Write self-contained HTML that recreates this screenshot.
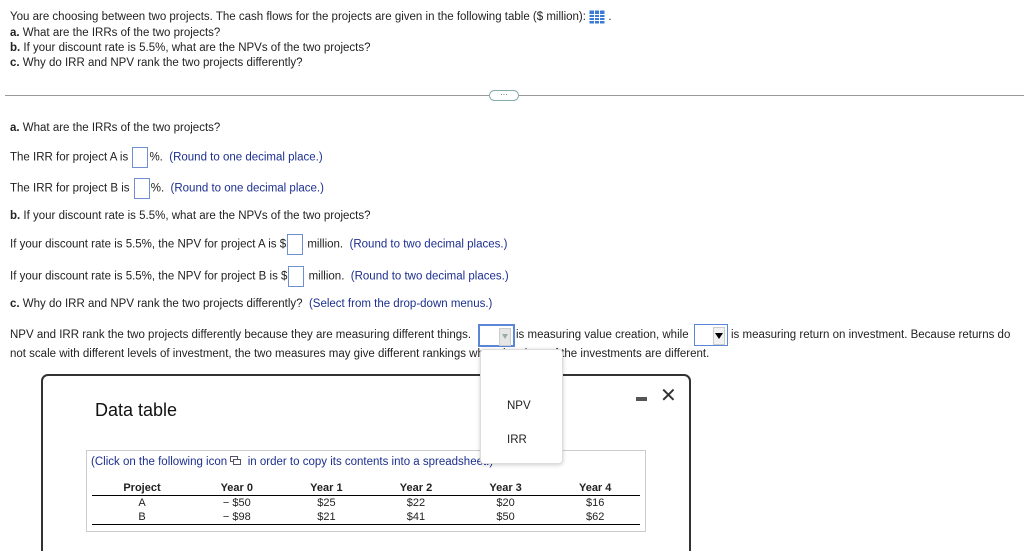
<!DOCTYPE html>
<html style="overflow:hidden;height:551px"><head><style>
body{margin:0;width:1024px;height:551px;overflow:hidden;background:#fff;font-family:"Liberation Sans",Arial,sans-serif;font-size:11.5px;color:#222;position:relative}
.t{position:absolute;white-space:nowrap;line-height:13px}
.bl{color:#1c2f8f}
.box{display:inline-block;width:14px;height:19px;border:1px solid #6f8fd0;vertical-align:middle;margin:0 1px;background:#fff}
b{font-weight:bold}
.dd{position:absolute;border:1px solid #5b86d6;background:#fff;height:20px}
.dd .a{position:absolute;right:2px;top:2px;width:10px;height:16px;background:#e6e6e6;border:1px solid #ccc}
table{border-collapse:collapse;font-size:11px}
td,th{text-align:center;padding:0;line-height:14px}
</style></head><body>
<div class="t" style="left:10px;top:10px">You are choosing between two projects. The cash flows for the projects are given in the following table ($ million):
<svg width="16" height="14" style="vertical-align:middle" viewBox="0 0 16 14"><rect x="0.5" y="0.5" width="15" height="13" fill="#3a7bd5"/><g stroke="#fff" stroke-width="1"><line x1="0" y1="4.5" x2="16" y2="4.5"/><line x1="0" y1="7.5" x2="16" y2="7.5"/><line x1="0" y1="10.5" x2="16" y2="10.5"/><line x1="5.5" y1="0" x2="5.5" y2="14"/><line x1="10.5" y1="0" x2="10.5" y2="14"/></g></svg> .</div>
<div class="t" style="left:10px;top:27px"><b>a.</b> What are the IRRs of the two projects?</div>
<div class="t" style="left:10px;top:42px"><b>b.</b> If your discount rate is 5.5%, what are the NPVs of the two projects?</div>
<div class="t" style="left:10px;top:57px"><b>c.</b> Why do IRR and NPV rank the two projects differently?</div>
<div style="position:absolute;left:5px;right:0;top:95px;border-top:1px solid #999"></div>
<div style="position:absolute;left:489px;top:90px;width:28px;height:9px;border:1px solid #8aa;border-radius:6px;background:#fff;font-size:8px;line-height:8px;text-align:center;color:#345">···</div>
<div class="t" style="left:10px;top:122px"><b>a.</b> What are the IRRs of the two projects?</div>
<div class="t" style="left:10px;top:147px;line-height:21px">The IRR for project A is <span class="box"></span>%.&nbsp; <span class="bl">(Round to one decimal place.)</span></div>
<div class="t" style="left:10px;top:178px;line-height:21px">The IRR for project B is <span class="box"></span>%.&nbsp; <span class="bl">(Round to one decimal place.)</span></div>
<div class="t" style="left:10px;top:210px"><b>b.</b> If your discount rate is 5.5%, what are the NPVs of the two projects?</div>
<div class="t" style="left:10px;top:234px;line-height:21px">If your discount rate is 5.5%, the NPV for project A is $<span class="box"></span> million.&nbsp; <span class="bl">(Round to two decimal places.)</span></div>
<div class="t" style="left:10px;top:266px;line-height:21px">If your discount rate is 5.5%, the NPV for project B is $<span class="box"></span> million.&nbsp; <span class="bl">(Round to two decimal places.)</span></div>
<div class="t" style="left:10px;top:298px"><b>c.</b> Why do IRR and NPV rank the two projects differently?&nbsp; <span class="bl">(Select from the drop-down menus.)</span></div>
<div class="t" style="left:10px;top:329px">NPV and IRR rank the two projects differently because they are measuring different things.</div>
<div class="dd" style="left:478px;top:324px;width:33px;border-width:2px;height:19px"><div class="a"><svg width="10" height="16"><polygon points="2,5 8,5 5,10" fill="#9aa"/></svg></div></div>
<div class="t" style="left:516px;top:329px">is measuring value creation, while</div>
<div class="dd" style="left:694px;top:324px;width:32px"><div class="a" style="background:#f2f2f2"><svg width="10" height="16"><polygon points="1,5 9,5 5,11" fill="#000"/></svg></div></div>
<div class="t" style="left:731px;top:329px">is measuring return on investment. Because returns do</div>
<div class="t" style="left:10px;top:348px">not scale with different levels of investment, the two measures may give different rankings when the sizes of the investments are different.</div>
<div style="position:absolute;left:41px;top:374px;width:646px;height:190px;border:2px solid #333;border-radius:7px;background:#fff"></div>
<div class="t" style="left:95px;top:400px;font-size:18px;line-height:20px;color:#111">Data table</div>
<div style="position:absolute;left:636px;top:397px;width:11px;height:4px;background:#555"></div>
<div class="t" style="left:660px;top:385px;font-size:20px;line-height:22px;color:#333">✕</div>
<div style="position:absolute;left:86px;top:450px;width:558px;height:80px;border:1px solid #ccc;background:#fff"></div>
<div class="t bl" style="left:91px;top:456px">(Click on the following icon <svg width="11" height="9"><rect x="0.5" y="0.5" width="7" height="5" fill="none" stroke="#556"/><rect x="3.5" y="3.5" width="7" height="5" fill="#fff" stroke="#556"/></svg> &nbsp;in order to copy its contents into a spreadsheet.)</div>
<table style="position:absolute;left:92px;top:481px;width:548px">
<tr style="border-bottom:1px solid #000"><th style="width:100px">Project</th><th>Year 0</th><th>Year 1</th><th>Year 2</th><th>Year 3</th><th>Year 4</th></tr>
<tr><td>A</td><td>− $50</td><td>$25</td><td>$22</td><td>$20</td><td>$16</td></tr>
<tr style="border-bottom:1px solid #000"><td>B</td><td>− $98</td><td>$21</td><td>$41</td><td>$50</td><td>$62</td></tr>
</table>
<div style="position:absolute;left:480px;top:349px;width:81px;height:113px;background:#fff;border:1px solid #ddd;border-radius:4px;box-shadow:0 1px 4px rgba(0,0,0,.2)"></div>
<div class="t" style="left:507px;top:400px">NPV</div>
<div class="t" style="left:507px;top:434px">IRR</div>
</body></html>
